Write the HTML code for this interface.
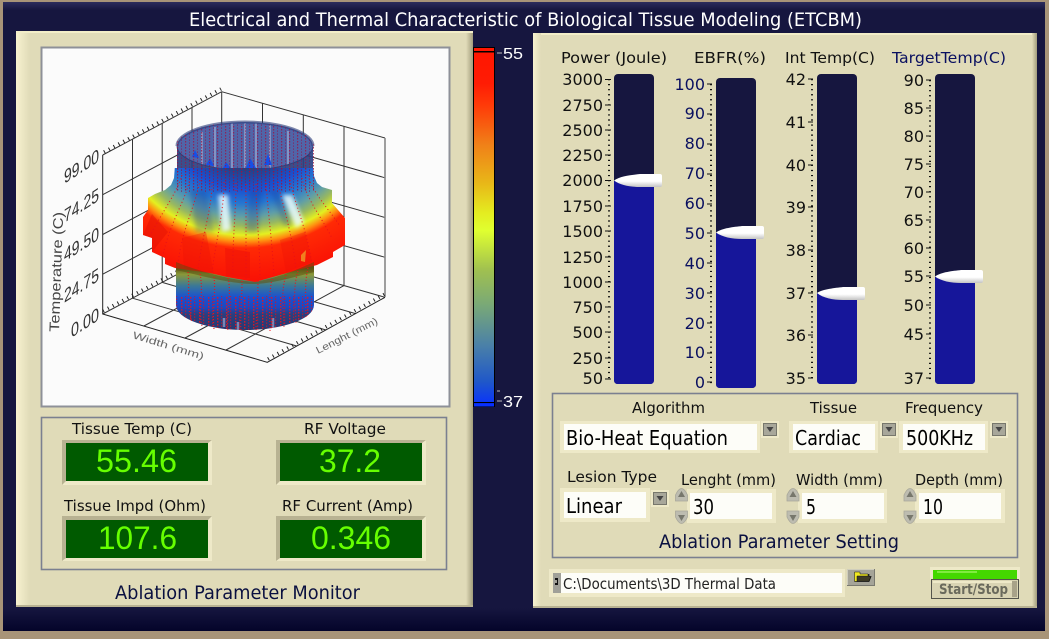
<!DOCTYPE html>
<html><head><meta charset="utf-8"><title>ETCBM</title>
<style>html,body{margin:0;padding:0;width:1049px;height:639px;overflow:hidden;background:#a89478}svg{display:block}
text{font-family:"DejaVu Sans","Liberation Sans",sans-serif;}
.f{fill:#000;font-size:20px}.d{fill:#66ff00;font-size:32px;font-family:"Liberation Sans",sans-serif}
</style></head><body>
<svg width="1049" height="639" viewBox="0 0 1049 639" xmlns="http://www.w3.org/2000/svg">
<defs>
<linearGradient id="top" x1="0" y1="0" x2="0" y2="1"><stop offset="0" stop-color="#2c2c5c"/><stop offset="1" stop-color="#16163f"/></linearGradient>
<linearGradient id="bot" x1="0" y1="0" x2="0" y2="1"><stop offset="0" stop-color="#16163f"/><stop offset="1" stop-color="#04042a"/></linearGradient>
<linearGradient id="hl" x1="0" y1="0" x2="1" y2="0"><stop offset="0" stop-color="#f7f2cf"/><stop offset="1" stop-color="#e0dbb8"/></linearGradient>
<linearGradient id="sh" x1="0" y1="0" x2="1" y2="0"><stop offset="0" stop-color="#e0dbb8"/><stop offset="1" stop-color="#a29c7c"/></linearGradient>
<linearGradient id="cb" x1="0" y1="0" x2="0" y2="1">
<stop offset="0" stop-color="#ff1500"/><stop offset=".1" stop-color="#ff1c04"/><stop offset=".16" stop-color="#ff3a08"/><stop offset=".27" stop-color="#f08018"/><stop offset=".38" stop-color="#e8b818"/><stop offset=".46" stop-color="#e4ec20"/><stop offset=".51" stop-color="#e0ff30"/><stop offset=".62" stop-color="#a0c050"/><stop offset=".72" stop-color="#78a878"/><stop offset=".83" stop-color="#4a80a8"/><stop offset=".93" stop-color="#2058c8"/><stop offset="1" stop-color="#0830ff"/></linearGradient>
<linearGradient id="need" x1="0" y1="0" x2="0" y2="1"><stop offset="0" stop-color="#fff"/><stop offset=".55" stop-color="#fff"/><stop offset="1" stop-color="#c4c4c4"/></linearGradient>
<radialGradient id="bulge" gradientUnits="userSpaceOnUse" cx="0" cy="0" r="1" gradientTransform="translate(245 120) scale(180 160)">
<stop offset=".3" stop-color="#27407f"/><stop offset=".43" stop-color="#1a50d0"/><stop offset=".52" stop-color="#2676d0"/><stop offset=".6" stop-color="#5f9ea8"/><stop offset=".66" stop-color="#98b860"/><stop offset=".72" stop-color="#e4f020"/><stop offset=".76" stop-color="#ff9010"/><stop offset=".8" stop-color="#ff2a05"/><stop offset="1" stop-color="#fa1205"/></radialGradient>
<linearGradient id="lower" gradientUnits="userSpaceOnUse" x1="0" y1="268" x2="0" y2="332">
<stop offset="0" stop-color="#5a5a18"/><stop offset=".1" stop-color="#8a9838"/><stop offset=".28" stop-color="#3a7898"/><stop offset=".46" stop-color="#1a50d0"/><stop offset=".62" stop-color="#1c48c0"/><stop offset=".72" stop-color="#2a3f80"/><stop offset="1" stop-color="#27386f"/></linearGradient>
<pattern id="dotsT" width="8" height="3" patternUnits="userSpaceOnUse"><rect x="1" width="1.2" height="1.5" fill="#a01040"/><rect x="5" y="1.5" width="1" height="1.2" fill="#901048"/></pattern>
<pattern id="dotsB" width="9" height="3" patternUnits="userSpaceOnUse"><rect x="1" width="1.4" height="1.6" fill="#f01018"/><rect x="5" y="1.5" width="1.2" height="1.3" fill="#d81020"/></pattern>
<filter id="bl" x="-50%" y="-50%" width="200%" height="200%"><feGaussianBlur stdDeviation="2"/></filter>
<clipPath id="sil"><polygon points="175,165 174,178 171,185 165,190 155,194 148,198 148,210 143,217 143,235 152,238 152,252 165,258 165,264 175,268 210,273 227,277 255,282 287,273 317,265 333,257 333,252 345,245 345,218 332,203 332,190 322,187 317,183 314,176 313,165"/></clipPath>
<clipPath id="cyl"><path d="M176 146A69 24 0 0 1 314 146V172H176Z"/></clipPath>
<clipPath id="cyl2"><path d="M176 278H314V305A69 25 0 0 1 176 305Z"/></clipPath>
</defs>
<rect width="1049" height="639" fill="#a89478"/>
<rect x="3" y="2" width="1042" height="629" fill="#16163f"/>
<rect x="3" y="2" width="1042" height="8" fill="url(#top)"/>
<rect x="3" y="608" width="1042" height="23" fill="url(#bot)"/>
<text x="189" y="26" font-size="19" fill="#fff" textLength="673" lengthAdjust="spacingAndGlyphs">Electrical and Thermal Characteristic of Biological Tissue Modeling (ETCBM)</text>

<!-- left panel -->
<rect x="16" y="31" width="457" height="576" fill="#e0dbb8"/>
<rect x="16" y="31" width="14" height="576" fill="url(#hl)"/>
<rect x="466" y="31" width="7" height="576" fill="url(#sh)"/>
<rect x="16" y="31" width="457" height="2" fill="#f2edc8"/>
<rect x="16" y="605" width="457" height="2" fill="#b8b292"/>

<!-- plot -->
<rect x="41.5" y="47.5" width="408" height="359" fill="#fbfbfb" stroke="#8e9098" stroke-width="2"/>
<g fill="none" stroke="#333" stroke-width="1">
<path d="M102.7 155L221.7 91.7M102.7 194.7L221.7 131.5M102.7 234.5L221.7 171.2M102.7 274.2L221.7 211M221.7 91.7L385 138M221.7 131.5L385 177.8M221.7 171.2L385 217.5M221.7 211L385 257.3M102.7 314L221.7 250.7L385 297.3"/>
<path d="M132.5 298.2V139.2M162.2 282.4V123.4M192 266.5V107.5M221.7 250.7V91.7M262.5 262.3V103.3M303.3 274V115M344 285.6V126.6"/>
<path d="M132.5 298.2L296.7 346M162.2 282.4L326 330M192 266.5L355.6 313.6M143.9 326L262.5 262.3M185 338L303.3 274M226 350L344 285.6"/>
<path d="M102.7 155V314L267.3 362.3L385 297.3" stroke="#222"/>
</g>
<path d="M385 138V297" stroke="#888" stroke-width="1.6" fill="none"/>
<path d="M104 152L221 89M103 311L222 248M268 359L385 294" stroke="#222" stroke-width="3.5" stroke-dasharray="1 4.5" fill="none"/>
<g fill="#333" font-size="19">
<text style="font-family:'Liberation Sans',sans-serif" transform="translate(64 184) skewY(-33)" textLength="35" lengthAdjust="spacingAndGlyphs">99.00</text>
<text style="font-family:'Liberation Sans',sans-serif" transform="translate(64 223) skewY(-33)" textLength="35" lengthAdjust="spacingAndGlyphs">74.25</text>
<text style="font-family:'Liberation Sans',sans-serif" transform="translate(64 262) skewY(-33)" textLength="35" lengthAdjust="spacingAndGlyphs">49.50</text>
<text style="font-family:'Liberation Sans',sans-serif" transform="translate(64 303) skewY(-33)" textLength="35" lengthAdjust="spacingAndGlyphs">24.75</text>
<text style="font-family:'Liberation Sans',sans-serif" transform="translate(71 338) skewY(-33)" textLength="28" lengthAdjust="spacingAndGlyphs">0.00</text>
</g>
<text transform="translate(59 332) rotate(-88)" font-size="14" fill="#444" textLength="120" lengthAdjust="spacingAndGlyphs" style="font-family:'Liberation Sans',sans-serif">Temperature (C)</text>
<text transform="translate(132 338) rotate(17)" font-size="10" fill="#666" textLength="74" lengthAdjust="spacingAndGlyphs" style="font-family:'Liberation Sans',sans-serif">Width (mm)</text>
<text transform="translate(318 354) rotate(-27)" font-size="10" fill="#666" textLength="68" lengthAdjust="spacingAndGlyphs" style="font-family:'Liberation Sans',sans-serif">Lenght (mm)</text>

<!-- surface: lower cylinder -->
<path d="M176 265V305A69 25 0 0 0 314 305V265Z" fill="url(#lower)"/>
<path d="M224 318V327M273 318V328M238 322V330" stroke="#98a6d0" stroke-width="2.5" opacity=".7" fill="none"/>
<rect x="176" y="296" width="138" height="36" fill="url(#dotsB)" clip-path="url(#cyl2)" opacity=".85"/>
<!-- top cylinder -->
<ellipse cx="245" cy="146" rx="68" ry="24" fill="#5065a8"/>
<path d="M202 132V168M215 127V171M232 123V173M256 123V173M270 125V171M288 131V166M245 123V174" stroke="#98a6d0" stroke-width="2" opacity=".7" fill="none"/>
<path d="M226 162L232 170H222ZM250 158L256 168H246ZM210 158L214 166L206 165ZM268 154L272 165L264 165ZM195 150L199 158L192 157Z" fill="#1550e8"/>
<path d="M177 146A68 24 0 0 0 313 146V185H177Z" fill="#2a3f80" opacity=".92"/>
<path d="M177 146A68 24 0 0 1 313 146" fill="none" stroke="#2a3a78" stroke-width="3" opacity=".6"/>
<path d="M177 146A68 24 0 0 0 313 146" fill="none" stroke="#25356f" stroke-width="1" opacity=".8"/>
<!-- bulge -->
<g clip-path="url(#sil)">
<rect x="140" y="168" width="210" height="118" fill="url(#bulge)"/>
<path d="M190 190L206 190L214 232L196 232ZM250 190L262 190L258 232L246 232ZM278 190L270 190L284 226L292 226Z" fill="#12389a" opacity=".28" filter="url(#bl)"/>
<path d="M218 195L228 195L231 230L222 232Z" fill="#eafcff" filter="url(#bl)" opacity=".85"/>
<path d="M282 195L292 195L304 222L296 228Z" fill="#eafcff" filter="url(#bl)" opacity=".85"/>
<polygon points="152,214 168,232 152,252 143,235" fill="#e01005" opacity=".45"/>
<polygon points="182,238 206,232 214,275 184,268" fill="#ea1106" opacity=".35"/>
<polygon points="225,248 250,252 250,278 226,276" fill="#f01206" opacity=".6"/>
<polygon points="280,240 305,232 312,262 286,272" fill="#ea1106" opacity=".3"/>
<polygon points="301,255 306,250 305,262 301,261" fill="#f08020"/>
<rect x="176" y="168" width="138" height="24" fill="url(#dotsT)" opacity=".85"/>
<g fill="none" stroke="#e81018" stroke-width="1" stroke-dasharray="1 2.6">
<path d="M182 175C176 195 160 215 150 236"/><path d="M190 178C186 200 170 222 163 255"/><path d="M200 180C196 205 182 228 178 264"/>
<path d="M212 182C212 210 202 235 198 270"/><path d="M224 182C224 212 216 240 212 272"/>
<path d="M236 183C236 212 232 245 233 276"/><path d="M246 184C246 215 246 248 246 279"/>
<path d="M256 184C256 212 260 246 260 278"/><path d="M266 183C268 212 272 240 274 276"/>
<path d="M278 182C282 205 292 230 296 270"/><path d="M290 180C294 203 306 225 312 264"/>
<path d="M302 178C306 198 320 215 332 238"/><path d="M308 175C312 192 328 208 340 226"/>
</g>
</g>
<rect x="176" y="124" width="138" height="48" fill="url(#dotsT)" clip-path="url(#cyl)" opacity=".75"/>
<path d="M176 262C195 270 230 280 255 282C285 276 300 268 314 262L314 272C295 277 270 284 253 284C230 284 195 274 176 270Z" fill="#5a4c10" opacity=".5"/>
<g fill="none" stroke="#f01018" stroke-width="1.1" stroke-dasharray="1 2">
<path d="M188 272C190 290 186 305 192 322"/><path d="M200 274C204 292 198 310 202 326"/><path d="M214 277C216 295 212 312 214 329"/><path d="M228 278C232 296 226 315 228 331"/><path d="M242 281C242 300 240 318 241 332"/>
<path d="M258 281C258 300 256 318 256 332"/><path d="M272 279C268 298 270 316 270 331"/><path d="M286 275C280 295 284 312 284 328"/><path d="M298 271C292 290 296 308 296 324"/><path d="M308 268C304 285 306 302 306 318"/>
</g>

<!-- color bar -->
<rect x="473.5" y="47.5" width="21" height="359" fill="url(#cb)" stroke="#000"/>
<rect x="474" y="48" width="20" height="3" fill="#ff1500"/><rect x="474" y="51" width="20" height="1.5" fill="#000"/>
<rect x="474" y="402" width="20" height="1.2" fill="#000"/><rect x="474" y="403.2" width="20" height="3.3" fill="#0830ff"/>
<path d="M497 53H502M497 401H502M497 391H500" stroke="#bbb" stroke-width="1"/>
<text x="503" y="59" font-size="16" fill="#fff" textLength="20" lengthAdjust="spacingAndGlyphs" style="font-family:'Liberation Sans',sans-serif">55</text>
<text x="503" y="407" font-size="16" fill="#fff" textLength="20" lengthAdjust="spacingAndGlyphs" style="font-family:'Liberation Sans',sans-serif">37</text>

<!-- monitor box -->
<rect x="41.500" y="417.500" width="405" height="152" fill="#e0dbb8" stroke="#7b8090" stroke-width="1.6"/>
<g font-size="15" fill="#111">
<text x="72" y="434" textLength="120" lengthAdjust="spacingAndGlyphs">Tissue Temp (C)</text>
<text x="304" y="434" textLength="82" lengthAdjust="spacingAndGlyphs">RF Voltage</text>
<text x="64" y="511" textLength="142" lengthAdjust="spacingAndGlyphs">Tissue Impd (Ohm)</text>
<text x="282" y="511" textLength="131" lengthAdjust="spacingAndGlyphs">RF Current (Amp)</text>
</g>
<g>
<rect x="62" y="440" width="150" height="45" fill="#eee9c8"/><path d="M62 440H212L208 443H66V481L62 485Z" fill="#b8b292"/><rect x="66" y="443" width="142" height="38" fill="#005a00"/>
<rect x="276" y="440" width="150" height="45" fill="#eee9c8"/><path d="M276 440H426L422 443H280V481L276 485Z" fill="#b8b292"/><rect x="280" y="443" width="142" height="38" fill="#005a00"/>
<rect x="62" y="516" width="150" height="45" fill="#eee9c8"/><path d="M62 516H212L208 520H66V558L62 561Z" fill="#b8b292"/><rect x="66" y="520" width="142" height="38" fill="#005a00"/>
<rect x="276" y="516" width="150" height="45" fill="#eee9c8"/><path d="M276 516H426L422 520H280V558L276 561Z" fill="#b8b292"/><rect x="280" y="520" width="142" height="38" fill="#005a00"/>
</g>
<text class="d" style="font-family:'Liberation Sans',sans-serif" x="96" y="472" textLength="81" lengthAdjust="spacingAndGlyphs">55.46</text>
<text class="d" style="font-family:'Liberation Sans',sans-serif" x="319" y="472" textLength="62" lengthAdjust="spacingAndGlyphs">37.2</text>
<text class="d" style="font-family:'Liberation Sans',sans-serif" x="98" y="549" textLength="79" lengthAdjust="spacingAndGlyphs">107.6</text>
<text class="d" style="font-family:'Liberation Sans',sans-serif" x="311" y="549" textLength="80" lengthAdjust="spacingAndGlyphs">0.346</text>
<text x="115" y="599" font-size="19" fill="#0a1040" textLength="245" lengthAdjust="spacingAndGlyphs">Ablation Parameter Monitor</text>

<!-- right panel -->
<rect x="533" y="33" width="504" height="575" fill="#e0dbb8"/>
<rect x="533" y="33" width="504" height="2" fill="#f2edc8"/>
<rect x="533" y="33" width="8" height="575" fill="url(#hl)"/>
<rect x="1032" y="33" width="5" height="575" fill="url(#sh)"/>
<rect x="533" y="606" width="504" height="2" fill="#b8b292"/>

<g font-size="15" fill="#111">
<text x="561" y="63" textLength="106" lengthAdjust="spacingAndGlyphs">Power (Joule)</text>
<text x="694" y="63" textLength="72" lengthAdjust="spacingAndGlyphs">EBFR(%)</text>
<text x="785" y="63" textLength="90" lengthAdjust="spacingAndGlyphs">Int Temp(C)</text>
<text x="892" y="63" textLength="114" lengthAdjust="spacingAndGlyphs" fill="#0a1060">TargetTemp(C)</text>
</g>

<!-- tanks -->
<rect x="614" y="74" width="40" height="310" rx="4" fill="#16163f"/><path d="M614 181H654V380Q654 384 650 384H618Q614 384 614 380Z" fill="#16169a"/>
<rect x="716" y="78" width="40" height="310" rx="4" fill="#16163f"/><path d="M716 233H756V384Q756 388 752 388H720Q716 388 716 384Z" fill="#16169a"/>
<rect x="817" y="74" width="40" height="310" rx="4" fill="#16163f"/><path d="M817 293H857V380Q857 384 853 384H821Q817 384 817 380Z" fill="#16169a"/>
<rect x="935" y="74" width="40" height="310" rx="4" fill="#16163f"/><path d="M935 277H975V380Q975 384 971 384H939Q935 384 935 380Z" fill="#16169a"/>
<!-- needles -->
<path d="M614 180.500C620 176 632 175 640 174H660Q662 174 662 176V185Q662 187 660 187H640C630 187 620 185 614 180.500Z" fill="url(#need)"/>
<path d="M716 232.500C722 228 734 227 742 226H762Q764 226 764 228V237Q764 239 762 239H742C732 239 722 237 716 232.500Z" fill="url(#need)"/>
<path d="M817 293C823 289 835 288 843 287H863Q865 287 865 289V298Q865 300 863 300H843C833 300 823 298 817 293Z" fill="url(#need)"/>
<path d="M935 276.500C941 272 953 271 961 270H981Q983 270 983 272V281Q983 283 981 283H961C951 283 941 281 935 276.500Z" fill="url(#need)"/>

<!-- ticks -->
<g fill="none" stroke="#111" stroke-width="1">
<g stroke-width="2" stroke-dasharray="1.2 3.85"><path d="M609 79V381"/><path d="M711 84V384"/><path d="M812 79V380"/><path d="M930 80V380"/></g>
<path d="M605 79.500h6M605 105h6M605 130h6M605 155h6M605 180.500h6M605 206h6M605 231h6M605 257h6M605 282h6M605 307h6M605 332h6M605 358h6M605 379h6"/>
<path d="M707 84h5M707 114h5M707 144h5M707 174h5M707 204h5M707 233h5M707 263h5M707 293h5M707 323h5M707 353h5M707 382h5"/>
<path d="M808 79h5M808 122h5M808 165h5M808 207h5M808 250h5M808 293h5M808 335h5M808 378h5"/>
<path d="M926 80h5M926 108h5M926 136h5M926 164h5M926 192h5M926 220h5M926 248h5M926 276h5M926 305h5M926 334h5M926 378h5"/>
</g>

<!-- scale labels -->
<g style="fill:#111;font-size:16px;text-anchor:end">
<text x="603" y="85">3000</text><text x="603" y="111">2750</text><text x="603" y="136">2500</text><text x="603" y="161">2250</text><text x="603" y="186">2000</text><text x="603" y="212">1750</text><text x="603" y="237">1500</text><text x="603" y="263">1250</text><text x="603" y="288">1000</text><text x="603" y="313">750</text><text x="603" y="338">500</text><text x="603" y="364">250</text><text x="603" y="384">50</text>
</g>
<g style="fill:#0a1060;font-size:16px;text-anchor:end">
<text x="705" y="90">100</text><text x="705" y="119">90</text><text x="705" y="149">80</text><text x="705" y="179">70</text><text x="705" y="209">60</text><text x="705" y="239">50</text><text x="705" y="269">40</text><text x="705" y="299">30</text><text x="705" y="329">20</text><text x="705" y="358">10</text><text x="705" y="388">0</text>
</g>
<g style="fill:#111;font-size:16px;text-anchor:end">
<text x="806" y="85">42</text><text x="806" y="128">41</text><text x="806" y="171">40</text><text x="806" y="213">39</text><text x="806" y="256">38</text><text x="806" y="299">37</text><text x="806" y="341">36</text><text x="806" y="384">35</text>
<text x="924" y="86">90</text><text x="924" y="114">85</text><text x="924" y="142">80</text><text x="924" y="170">75</text><text x="924" y="198">70</text><text x="924" y="226">65</text><text x="924" y="254">60</text><text x="924" y="282">55</text><text x="924" y="311">50</text><text x="924" y="340">45</text><text x="924" y="384">37</text>
</g>

<!-- settings box -->
<rect x="552.500" y="393.500" width="465" height="164" fill="#e0dbb8" stroke="#7b8090" stroke-width="1.6"/>
<g font-size="15" fill="#111">
<text x="632" y="413" textLength="73" lengthAdjust="spacingAndGlyphs">Algorithm</text>
<text x="810" y="413" textLength="47" lengthAdjust="spacingAndGlyphs">Tissue</text>
<text x="905" y="413" textLength="78" lengthAdjust="spacingAndGlyphs">Frequency</text>
<text x="567" y="482" textLength="90" lengthAdjust="spacingAndGlyphs">Lesion Type</text>
<text x="681" y="485" textLength="95" lengthAdjust="spacingAndGlyphs">Lenght (mm)</text>
<text x="796" y="485" textLength="87" lengthAdjust="spacingAndGlyphs">Width (mm)</text>
<text x="915" y="485" textLength="88" lengthAdjust="spacingAndGlyphs">Depth (mm)</text>
</g>
<!-- fields -->
<g fill="#eee9c8">
<rect x="560" y="421" width="200" height="32"/><rect x="789" y="421" width="89" height="32"/><rect x="899" y="421" width="89" height="32"/>
<rect x="560" y="488" width="90" height="34"/><rect x="687" y="489" width="89" height="34"/><rect x="798" y="489" width="89" height="34"/><rect x="915" y="489" width="90" height="34"/>
<rect x="549" y="569" width="296" height="28"/>
</g>
<g fill="#fdfdf8">
<rect x="564" y="424" width="193" height="26"/><rect x="793" y="424" width="82" height="26"/><rect x="903" y="424" width="82" height="26"/>
<rect x="564" y="492" width="82" height="26"/><rect x="690" y="493" width="82" height="26"/><rect x="802" y="493" width="82" height="26"/><rect x="919" y="493" width="82" height="26"/>
<rect x="561" y="573" width="281" height="20"/>
</g>
<g>
<text class="f" x="566" y="445" textLength="162" lengthAdjust="spacingAndGlyphs">Bio-Heat Equation</text>
<text class="f" x="795" y="445" textLength="66" lengthAdjust="spacingAndGlyphs">Cardiac</text>
<text class="f" x="906" y="445" textLength="67" lengthAdjust="spacingAndGlyphs">500KHz</text>
<text class="f" x="566" y="513" textLength="56" lengthAdjust="spacingAndGlyphs">Linear</text>
<text class="f" x="693" y="514" textLength="21" lengthAdjust="spacingAndGlyphs">30</text>
<text class="f" x="806" y="514" textLength="10" lengthAdjust="spacingAndGlyphs">5</text>
<text class="f" x="923" y="514" textLength="20" lengthAdjust="spacingAndGlyphs">10</text>
</g>
<!-- dropdown buttons -->
<g fill="#eee9c8"><rect x="761" y="421" width="18" height="17"/><rect x="880" y="421" width="18" height="17"/><rect x="990" y="421" width="18" height="17"/><rect x="651" y="490" width="18" height="17"/></g>
<g fill="#a8a79a" stroke="#77776c" stroke-width="1"><rect x="763.500" y="423.500" width="13" height="12"/><rect x="882.500" y="423.500" width="13" height="12"/><rect x="992.500" y="423.500" width="13" height="12"/><rect x="653.500" y="492.500" width="13" height="12"/></g>
<g fill="#444"><path d="M766.500 427h7l-3.500 5zM885.500 427h7l-3.500 5zM995.500 427h7l-3.500 5zM656.500 496h7l-3.500 5z"/></g>
<!-- spinners -->
<g fill="#bdbcb0" stroke="#a8a79a" stroke-width=".8">
<path d="M675.500 501V495Q681.500 482 687.500 495V501Z"/><path d="M675.500 511V517Q681.500 530 687.500 517V511Z"/>
<path d="M787 501V495Q793 482 799 495V501Z"/><path d="M787 511V517Q793 530 799 517V511Z"/>
<path d="M904 501V495Q910 482 916 495V501Z"/><path d="M904 511V517Q910 530 916 517V511Z"/>
</g>
<g fill="#77776c"><path d="M681.500 491l3.500 6h-7zM681.500 521l3.500-6h-7zM793 491l3.500 6h-7zM793 521l3.500-6h-7zM910 491l3.500 6h-7zM910 521l3.500-6h-7z"/></g>
<text x="659" y="548" font-size="19" fill="#0a1040" textLength="240" lengthAdjust="spacingAndGlyphs">Ablation Parameter Setting</text>

<!-- path -->
<rect x="553" y="573" width="8" height="20" fill="#a0a098"/>
<path d="M555 578h3v2h-3zM557 580h1v3h-1zM555 583h3v2h-3z" fill="#111"/>
<text x="563" y="589" font-size="15" fill="#222" textLength="213" lengthAdjust="spacingAndGlyphs">C:\Documents\3D Thermal Data</text>
<rect x="847" y="569" width="28" height="17" fill="#a5a498"/><path d="M847 569h28v1h-28zM847 569h1v17h-1z" fill="#cfcdbc"/><path d="M847 585h28v1h-28zM874 569h1v17h-1z" fill="#7a7a70"/>
<path d="M855 572.500v9h14l2-5h-2v-2h-9l-1-2z" fill="#3d3a26" stroke="#111" stroke-width=".8"/>
<path d="M854.500 572v9.500h2.500v-5.500h11v-2h-8v-2z" fill="#f0e820" stroke="#111" stroke-width=".5"/>

<!-- start stop -->
<rect x="930" y="567" width="90" height="13" fill="#eee9c8"/>
<rect x="933" y="570" width="84" height="9.500" fill="#44d800"/>
<rect x="937" y="571" width="40" height="2" fill="#90f050" opacity=".8"/>
<rect x="931.500" y="579.500" width="87" height="19" fill="#d9d4b3" stroke="#55554c"/>
<rect x="933" y="581" width="84" height="2" fill="#eee9c8"/><rect x="1012" y="581" width="5" height="16" fill="#a8a288"/>
<text x="939" y="594" font-size="14" font-weight="bold" fill="#6a6a5c" textLength="69" lengthAdjust="spacingAndGlyphs">Start/Stop</text>
</svg>
</body></html>
